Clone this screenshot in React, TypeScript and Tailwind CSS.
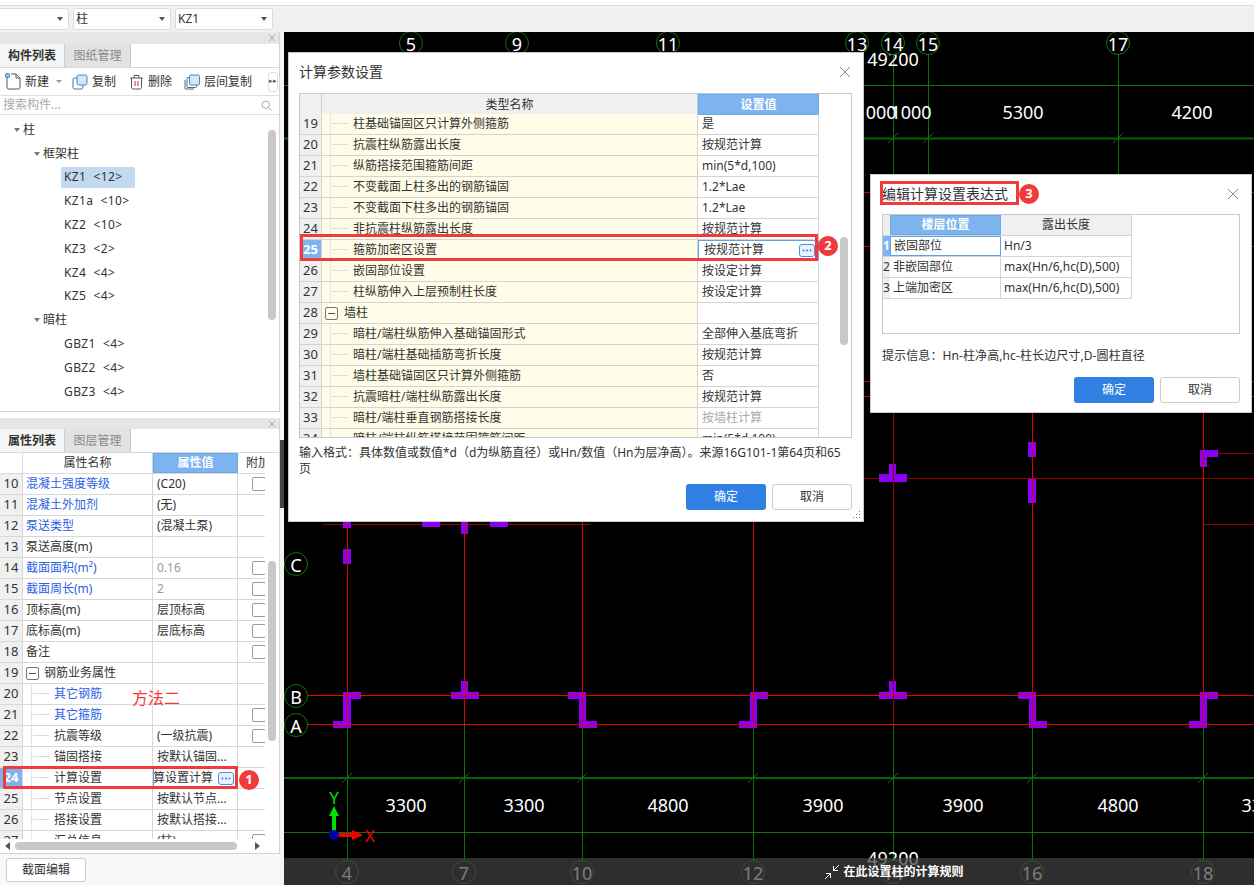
import React from "react"

const propRows = [
    {no: 10, name: "混凝土强度等级", value: "(C20)", blue: true, check: true},
    {no: 11, name: "混凝土外加剂", value: "(无)", blue: true},
    {no: 12, name: "泵送类型", value: "(混凝土泵)", blue: true},
    {no: 13, name: "泵送高度(m)", value: ""},
    {no: 14, name: "截面面积(m²)", value: "0.16", blue: true, check: true, gray: true},
    {no: 15, name: "截面周长(m)", value: "2", blue: true, check: true, gray: true},
    {no: 16, name: "顶标高(m)", value: "层顶标高", check: true},
    {no: 17, name: "底标高(m)", value: "层底标高", check: true},
    {no: 18, name: "备注", value: "", check: true},
    {no: 19, name: "钢筋业务属性", value: "", group: true},
    {no: 20, name: "其它钢筋", value: "", sub: true, blue: true},
    {no: 21, name: "其它箍筋", value: "", sub: true, blue: true, check: true},
    {no: 22, name: "抗震等级", value: "(一级抗震)", sub: true, check: true},
    {no: 23, name: "锚固搭接", value: "按默认锚固...", sub: true},
    {no: 24, name: "计算设置", value: "按默认计算设置计算", sub: true, active: true},
    {no: 25, name: "节点设置", value: "按默认节点...", sub: true},
    {no: 26, name: "搭接设置", value: "按默认搭接...", sub: true},
    {no: 27, name: "汇总信息", value: "(柱)", sub: true, check: true},
]

const paramRows = [
    {no: 19, name: "柱基础锚固区只计算外侧箍筋", value: "是"},
    {no: 20, name: "抗震柱纵筋露出长度", value: "按规范计算"},
    {no: 21, name: "纵筋搭接范围箍筋间距", value: "min(5*d,100)"},
    {no: 22, name: "不变截面上柱多出的钢筋锚固", value: "1.2*Lae"},
    {no: 23, name: "不变截面下柱多出的钢筋锚固", value: "1.2*Lae"},
    {no: 24, name: "非抗震柱纵筋露出长度", value: "按规范计算"},
    {no: 25, name: "箍筋加密区设置", value: "按规范计算", active: true},
    {no: 26, name: "嵌固部位设置", value: "按设定计算"},
    {no: 27, name: "柱纵筋伸入上层预制柱长度", value: "按设定计算"},
    {no: 28, name: "墙柱", value: "", group: true},
    {no: 29, name: "暗柱/端柱纵筋伸入基础锚固形式", value: "全部伸入基底弯折"},
    {no: 30, name: "暗柱/端柱基础插筋弯折长度", value: "按规范计算"},
    {no: 31, name: "墙柱基础锚固区只计算外侧箍筋", value: "否"},
    {no: 32, name: "抗震暗柱/端柱纵筋露出长度", value: "按规范计算"},
    {no: 33, name: "暗柱/端柱垂直钢筋搭接长度", value: "按墙柱计算", gray: true},
    {no: 34, name: "暗柱/端柱纵筋搭接范围箍筋间距", value: "min(5*d,100)"},
]

const treeRows = [
    {label: "柱", level: 0, open: true},
    {label: "框架柱", level: 1, open: true},
    {label: "KZ1  <12>", level: 2, selected: true},
    {label: "KZ1a  <10>", level: 2},
    {label: "KZ2  <10>", level: 2},
    {label: "KZ3  <2>", level: 2},
    {label: "KZ4  <4>", level: 2},
    {label: "KZ5  <4>", level: 2},
    {label: "暗柱", level: 1, open: true},
    {label: "GBZ1  <4>", level: 2},
    {label: "GBZ2  <4>", level: 2},
    {label: "GBZ3  <4>", level: 2},
]

const purple = [
    "343,692 361,692 361,699 351,699 351,728 333,728 333,721 343,721",
    "461,681 468,681 468,692 479,692 479,699 451,699 451,692 461,692",
    "568,692 586,692 586,721 597,721 597,728 579,728 579,699 568,699",
    "750,692 768,692 768,699 757,699 757,728 739,728 739,721 750,721",
    "889,681 896,681 896,692 907,692 907,699 879,699 879,692 889,692",
    "1018,692 1036,692 1036,721 1047,721 1047,728 1029,728 1029,699 1018,699",
    "1200,692 1218,692 1218,699 1207,699 1207,728 1189,728 1189,721 1200,721",
    "889,464 896,464 896,474 907,474 907,482 879,482 879,474 889,474",
    "1028,442 1036,442 1036,457 1028,457",
    "1028,479 1036,479 1036,503 1028,503",
    "1200,450 1218,450 1218,457 1207,457 1207,467 1200,467",
    "343,549 351,549 351,564 343,564",
    "343,518 351,518 351,528 343,528",
    "422,518 440,518 440,527 422,527",
    "461,518 468,518 468,534 461,534",
    "490,518 508,518 508,527 490,527",
]

const bottomAxes = [[347, "4"], [464, "7"], [582, "10"], [753, "12"], [893, "14"], [1032, "16"], [1203, "18"]] as const
const topAxes = [[411, "5"], [517, "9"], [668, "11"], [857, "13"], [893, "14"], [928, "15"], [1118, "17"]] as const
const sideAxes = [[564, "C"], [696, "B"], [725, "A"]] as const
const dims = [[406, 805, "3300"], [524, 805, "3300"], [668, 805, "4800"], [823, 805, "3900"], [963, 805, "3900"], [1118, 805, "4800"], [1262, 805, "3300"], [876, 112, "1000"], [911, 112, "1000"], [1023, 112, "5300"], [1192, 112, "4200"], [893, 59, "49200"], [893, 858, "49200"]] as const

function Axis({x, y, label}: {x: number; y: number; label: string}) {
    return (
        <g>
            <circle cx={x} cy={y} r={11.5} fill="#000" stroke="#0b7a0b" strokeWidth={1}/>
            <text x={x} y={y + 1} fill="#fff" fontSize={18} textAnchor="middle" dominantBaseline="central">{label}</text>
        </g>
    )
}

function CadCanvas() {
    const vLine = "#0b730b"
    return (
        <svg className="block w-full h-full" viewBox="284 32 970 853" fontFamily="'Noto Sans', sans-serif">
            <rect x={284} y={32} width={970} height={853} fill="#000"/>
            <path d="M284 85.5H1254M284 832.5H1254" stroke={vLine} strokeWidth={1}/>
            <path d="M284 138.5H1254M284 778H1254" stroke="#0a5f0a" strokeWidth={2}/>
            {topAxes.map(([x]) => <path key={x} d={`M${x + 0.5} 54V180`} stroke={vLine}/>)}
            {bottomAxes.map(([x]) => <path key={x} d={`M${x + 0.5} 725V862`} stroke={vLine}/>)}
            {[...topAxes.slice(4)].map(([x]) => <path key={x} d={`M${x - 5} 143L${x + 5} 133`} stroke={vLine}/>)}
            {bottomAxes.map(([x]) => <path key={x} d={`M${x - 5} 783L${x + 5} 773`} stroke={vLine}/>)}
            {[192, 246, 381, 396].map((y) => <path key={y} d={`M864 ${y + 0.5}H1254`} stroke="#b00000"/>)}
            <path d="M864 478.5H1254M323 524.5H590M1203 453.5H1254M1203 524.5H1254" stroke="#8f0000"/>
            {purple.map((p) => <polygon key={p} points={p} fill="#8a00f5"/>)}
            <path d="M347.5 410V725M464.5 410V725M582.5 410V725M753.5 410V725M1032.5 410V725M1203.5 410V725" stroke="#e00000"/>
            <path d="M893.5 410V725" stroke="#980000"/>
            <path d="M284 695.5H1254M284 724.5H1254" stroke="#f00000"/>
            {dims.map(([x, y, t], i) => (
                <text key={i} x={x} y={y} fill="#fff" fontSize={18} textAnchor="middle" dominantBaseline="central">{t}</text>
            ))}
            {topAxes.map(([x, t]) => <Axis key={x} x={x} y={43} label={t}/>)}
            {bottomAxes.map(([x, t]) => <Axis key={x} x={x} y={872} label={t}/>)}
            {sideAxes.map(([y, t]) => <Axis key={y} x={296} y={y} label={t}/>)}
            <path d="M334 835V816" stroke="#00e000" strokeWidth={4}/>
            <polygon points="334,806 339,816 329,816" fill="#00e000"/>
            <text x={334} y={797} fill="#00e000" fontSize={17} textAnchor="middle" dominantBaseline="central">Y</text>
            <path d="M338 835H353" stroke="#f00000" strokeWidth={4}/>
            <polygon points="363,835 352,830 352,840" fill="#f00000"/>
            <text x={370} y={835} fill="#f00000" fontSize={17} textAnchor="middle" dominantBaseline="central">X</text>
            <circle cx={334} cy={835} r={5} fill="#0000a8"/>
        </svg>
    )
}

function Caret() {
    return <span className="block w-0 h-0 border-x-[3px] border-x-transparent border-t-[4px] border-t-[#555]"/>
}

function SelectBox({label, width}: {label: string; width: string}) {
    return (
        <div className={`${width} h-[22px] flex items-center justify-between pl-[2px] pr-[5px] bg-white border border-[#dcdcdc] rounded-[3px] text-[#333]`}>
            <span>{label}</span>
            <Caret/>
        </div>
    )
}

function CloseBar() {
    return (
        <div className="h-[12px] bg-[#e6e6e6] flex items-center justify-end pr-[3px] shrink-0">
            <svg width="8" height="8" viewBox="0 0 8 8"><path d="M1 1L7 7M7 1L1 7" stroke="#a8a8a8" strokeWidth="1"/></svg>
        </div>
    )
}

function Tabs({first, second}: {first: string; second: string}) {
    return (
        <div className="h-[24px] flex bg-white border-b border-[#d8d8d8] shrink-0">
            <div className="w-[65px] flex items-center justify-center font-bold text-[#333] bg-[#f5f5f5] border-r border-[#d0d0d0]">{first}</div>
            <div className="w-[66px] flex items-center justify-center text-[#8a8a8a] bg-[#e2e2e2] border-r border-[#c8c8c8]">{second}</div>
        </div>
    )
}

function NewIcon() {
    return (
        <svg width="16" height="17" viewBox="0 0 16 17" fill="none">
            <path d="M2 5V14.5C2 15.3 2.6 16 3.4 16H13.5C14.3 16 15 15.3 15 14.5V5L11 1H6" stroke="#555"/>
            <path d="M11 1V5H15" stroke="#555"/>
            <rect x="0" y="0" width="5" height="5" fill="#4a90e2"/>
            <path d="M0 0L5 5M5 0L0 5" stroke="#fff" strokeWidth="0.7"/>
        </svg>
    )
}

function CopyIcon() {
    return (
        <svg width="16" height="16" viewBox="0 0 16 16" fill="none">
            <rect x="1" y="4" width="10" height="11" rx="1.5" stroke="#666"/>
            <rect x="5" y="1" width="10" height="10" rx="1.5" fill="#d6e6fa" stroke="#3a86e0"/>
        </svg>
    )
}

function TrashIcon() {
    return (
        <svg width="15" height="16" viewBox="0 0 15 16" fill="none">
            <path d="M1 4H14M5 4V1.5H10V4" stroke="#555"/>
            <path d="M2.5 4V13.5C2.5 14.4 3.1 15 4 15H11C11.9 15 12.5 14.4 12.5 13.5V4" stroke="#555"/>
            <path d="M6 7V12M9 7V12" stroke="#e02020"/>
        </svg>
    )
}

function FloorCopyIcon() {
    return (
        <svg width="16" height="16" viewBox="0 0 16 16" fill="none">
            <path d="M1 6V15H10" stroke="#666"/>
            <rect x="3" y="3.5" width="9.5" height="10" rx="1" stroke="#666"/>
            <rect x="5.5" y="1" width="10" height="10" rx="1.5" fill="#d6e6fa" stroke="#3a86e0"/>
        </svg>
    )
}

function ToolBar() {
    return (
        <div className="h-[28px] flex items-center pl-[5px] text-[#333] bg-white border-b border-[#e0e0e0] shrink-0">
            <NewIcon/>
            <span className="ml-[4px]">新建</span>
            <span className="ml-[7px] block w-0 h-0 border-x-[3px] border-x-transparent border-t-[3px] border-t-[#999]"/>
            <span className="ml-[10px]"><CopyIcon/></span>
            <span className="ml-[4px]">复制</span>
            <span className="ml-[13px]"><TrashIcon/></span>
            <span className="ml-[4px]">删除</span>
            <span className="ml-[12px]"><FloorCopyIcon/></span>
            <span className="ml-[4px]">层间复制</span>
            <div className="ml-[16px] w-[10px] h-[20px] border border-[#e0e0e0] rounded-[3px] flex items-center justify-center text-[7px] text-[#555]">▸▸</div>
        </div>
    )
}

function ComponentTree() {
    return (
        <div className="flex-1 flex bg-white overflow-hidden pt-[3px] relative">
            <div className="flex-1 flex flex-col">
                {treeRows.map((row) => (
                    <div key={row.label} className="h-[23.8px] flex items-center text-[#333] shrink-0">
                        {row.level === 0 && <span className="ml-[14px] mr-[3px]"><TreeCaret/></span>}
                        {row.level === 1 && <span className="ml-[34px] mr-[3px]"><TreeCaret/></span>}
                        {row.level === 2 && (
                            <span className={`ml-[61px] w-[74px] h-[21px] pl-[3px] rounded-[2px] flex items-center whitespace-pre tracking-[0.4px] ${row.selected ? "bg-[#c2d9f1]" : ""}`}>{row.label}</span>
                        )}
                        {row.level < 2 && <span>{row.label}</span>}
                    </div>
                ))}
            </div>
            <div className="w-[8px] mr-[3px] pt-[12px]">
                <div className="w-[8px] h-[190px] bg-[#c8c8c8] rounded-[4px]"/>
            </div>
        </div>
    )
}

function TreeCaret() {
    return <span className="block w-0 h-0 border-x-[3.5px] border-x-transparent border-t-[4px] border-t-[#777]"/>
}

function Collapse() {
    return (
        <span className="w-[13px] h-[13px] shrink-0 border border-[#777] rounded-[2px] flex items-center justify-center">
            <span className="block w-[7px] h-px bg-[#555]"/>
        </span>
    )
}

function TreeLine() {
    return (
        <>
            <span className="absolute left-[8px] top-0 bottom-0 w-px bg-[#e4e4e4]"/>
            <span className="absolute left-[10px] top-[9px] w-[16px] h-px bg-[#dcdcdc]"/>
        </>
    )
}

function MoreButton() {
    return (
        <span className="w-[16px] h-[13px] shrink-0 border border-[#4a90e2] rounded-[3px] bg-[#eaf3fd] flex items-center justify-center">
            <svg width="10" height="3" viewBox="0 0 10 3"><circle cx="1.5" cy="1.5" r="1" fill="#2f7fe0"/><circle cx="5" cy="1.5" r="1" fill="#2f7fe0"/><circle cx="8.5" cy="1.5" r="1" fill="#2f7fe0"/></svg>
        </span>
    )
}

function Badge({n, className}: {n: number; className: string}) {
    return (
        <div className={`absolute w-[20px] h-[20px] rounded-full bg-[#f23a3a] text-white font-bold text-[13px] flex items-center justify-center ${className}`}>{n}</div>
    )
}

function PropertyTable() {
    return (
        <div className="flex-1 bg-white overflow-hidden relative">
            <div className="w-[265px] h-[387px] overflow-hidden">
                <div className="grid grid-cols-[23px_130px_85px_27px] h-[21px] text-[#333] border-b border-[#d8d8d8]">
                    <div className="border-r border-[#d8d8d8]"/>
                    <div className="flex items-center justify-center border-r border-[#d8d8d8]">属性名称</div>
                    <div className="flex items-center justify-center bg-[#7db4f0] border border-[#6aa8ec] text-white font-bold">属性值</div>
                    <div className="flex items-center pl-[8px] whitespace-nowrap overflow-hidden">附加</div>
                </div>
                {propRows.map((row) => (
                    <div key={row.no} className="grid grid-cols-[23px_130px_85px_27px] h-[21px] border-b border-[#d8d8d8] text-[#333]">
                        <div className={`flex items-center justify-center border-r border-[#d8d8d8] text-[13px] ${row.active ? "bg-[#7db4f0] text-white font-bold" : "bg-[#f0f0f0]"}`}>{row.no}</div>
                        <div className={`relative flex items-center border-r border-[#d8d8d8] whitespace-nowrap ${row.sub ? "pl-[31px]" : "pl-[3px]"} ${row.blue ? "text-[#2b62e3]" : ""}`}>
                            {row.sub && <TreeLine/>}
                            {row.group && <span className="mr-[5px]"><Collapse/></span>}
                            {row.name}
                        </div>
                        {row.active ? (
                            <div className="flex items-center justify-end overflow-hidden border border-[#5fa2ec] pr-[3px] gap-[5px]">
                                <span className="shrink-0 whitespace-nowrap">{row.value}</span>
                                <MoreButton/>
                            </div>
                        ) : (
                            <div className={`flex items-center pl-[4px] border-r border-[#d8d8d8] whitespace-nowrap overflow-hidden ${row.gray ? "text-[#999]" : ""}`}>{row.value}</div>
                        )}
                        <div className="flex items-center pl-[14px] overflow-hidden">
                            {row.check && <span className="w-[14px] h-[14px] shrink-0 border border-[#9a9a9a] rounded-[2px] bg-white"/>}
                        </div>
                    </div>
                ))}
            </div>
            <div className="absolute right-[3px] top-[108px] w-[8px] h-[180px] bg-[#c8c8c8] rounded-[4px]"/>
            <div className="absolute left-0 right-0 bottom-0 h-[14px] bg-white flex items-center px-[5px]">
                <span className="block w-0 h-0 border-y-[4px] border-y-transparent border-r-[5px] border-r-[#555]"/>
                <div className="ml-[5px] w-[222px] h-[8px] bg-[#c8c8c8] rounded-[4px]"/>
                <span className="ml-auto mr-[14px] block w-0 h-0 border-y-[4px] border-y-transparent border-l-[5px] border-l-[#555]"/>
            </div>
            <div className="absolute left-[3px] top-[313px] w-[235px] h-[23px] border-[3px] border-[#f23a3a]"/>
            <Badge n={1} className="left-[239px] top-[317px]"/>
            <div className="absolute left-[132px] top-[233px] text-[16px] text-[#f23a3a]">方法二</div>
        </div>
    )
}

function LeftPanel() {
    return (
        <div className="w-[280px] shrink-0 flex flex-col bg-[#f8f8f8] text-[12px]">
            <div className="h-[380px] flex flex-col border-r border-b border-[#d4d4d4] shrink-0">
                <CloseBar/>
                <Tabs first="构件列表" second="图纸管理"/>
                <ToolBar/>
                <div className="h-[19px] flex items-center justify-between pl-[3px] pr-[7px] bg-white border-b border-[#e0e0e0] text-[#aaa] shrink-0">
                    <span>搜索构件...</span>
                    <svg width="11" height="11" viewBox="0 0 11 11" fill="none"><circle cx="4.7" cy="4.7" r="3.7" stroke="#aaa"/><path d="M7.5 7.5L10.5 10.5" stroke="#aaa"/></svg>
                </div>
                <ComponentTree/>
            </div>
            <div className="h-[6px] bg-white shrink-0"/>
            <div className="h-[436px] flex flex-col border-r border-b border-[#d4d4d4] shrink-0 overflow-hidden">
                <div className="h-[11px] bg-[#e6e6e6] flex items-center justify-end pr-[3px] shrink-0">
                    <svg width="8" height="8" viewBox="0 0 8 8"><path d="M1 1L7 7M7 1L1 7" stroke="#a8a8a8"/></svg>
                </div>
                <Tabs first="属性列表" second="图层管理"/>
                <PropertyTable/>
            </div>
            <div className="flex-1 flex items-center pl-[6px] bg-[#f8f8f8]">
                <div className="w-[80px] h-[24px] flex items-center justify-center bg-white border border-[#ccc] rounded-[3px] text-[#333]">截面编辑</div>
            </div>
        </div>
    )
}

function DialogButtons() {
    return (
        <div className="flex justify-end gap-[6px] text-[12px]">
            <div className="w-[80px] h-[26px] flex items-center justify-center bg-[#2f80e2] rounded-[3px] text-white">确定</div>
            <div className="w-[80px] h-[26px] flex items-center justify-center bg-white border border-[#ccc] rounded-[3px] text-[#333]">取消</div>
        </div>
    )
}

function CloseIcon() {
    return <svg width="12" height="12" viewBox="0 0 12 12"><path d="M1 1L11 11M11 1L1 11" stroke="#888" strokeWidth="1"/></svg>
}

function ParamDialog() {
    return (
        <div className="absolute left-[4px] top-[20px] w-[576px] h-[470px] bg-white border border-[#c8c8c8] flex flex-col pl-[10px] pr-[11px] text-[12px] text-[#333]">
            <div className="h-[40px] flex items-center justify-between pb-[3px] shrink-0">
                <span className="text-[14px]">计算参数设置</span>
                <span className="mr-[1px]"><CloseIcon/></span>
            </div>
            <div className="h-[345px] w-[553px] relative border border-[#c8c8c8] overflow-hidden shrink-0">
                <div className="w-[519px]">
                    <div className="grid grid-cols-[22px_376px_121px] h-[20px] border-b border-[#d0d0d0]">
                        <div className="bg-[#f0f0f0] border-r border-[#d0d0d0]"/>
                        <div className="bg-[#f0f0f0] flex items-center justify-center pt-[1px] border-r border-[#d0d0d0]">类型名称</div>
                        <div className="bg-[#7db4f0] border border-[#6aa8ec] flex items-center justify-center pt-[1px] text-white font-bold">设置值</div>
                    </div>
                    {paramRows.map((row) => (
                        <div key={row.no} className="grid grid-cols-[22px_376px_121px] h-[21px] border-b border-[#d4d4d4]">
                            <div className={`flex items-center justify-center text-[13px] border-r border-[#d4d4d4] ${row.active ? "bg-[#7db4f0] text-white font-bold" : "bg-[#f0f0f0]"}`}>{row.no}</div>
                            <div className={`relative flex items-center bg-[#fffde8] border-r border-[#d4d4d4] whitespace-nowrap ${row.group ? "pl-[3px]" : "pl-[31px]"}`}>
                                {!row.group && <TreeLine/>}
                                {row.group && <span className="mr-[6px]"><Collapse/></span>}
                                {row.name}
                            </div>
                            {row.active ? (
                                <div className="flex items-center justify-between pl-[5px] pr-[3px] border border-[#5fa2ec]">
                                    <span>{row.value}</span>
                                    <MoreButton/>
                                </div>
                            ) : (
                                <div className={`flex items-center pl-[4px] border-r border-[#d4d4d4] ${row.gray ? "text-[#aaa]" : ""}`}>{row.value}</div>
                            )}
                        </div>
                    ))}
                </div>
                <div className="absolute left-[540px] top-[143px] w-[8px] h-[108px] bg-[#c8c8c8] rounded-[4px]"/>
                <div className="absolute left-0 top-[140px] w-[518px] h-[27px] border-[3px] border-[#f23a3a]"/>
                <Badge n={2} className="left-[518px] top-[142px]"/>
            </div>
            <p className="mt-[7px] h-[32px] leading-[16px] shrink-0">输入格式：具体数值或数值*d（d为纵筋直径）或Hn/数值（Hn为层净高）。来源16G101-1第64页和65页</p>
            <div className="mt-[7px]"><DialogButtons/></div>
            <svg className="absolute right-[2px] bottom-[2px]" width="9" height="9" viewBox="0 0 9 9">
                <path d="M7 1h1v1H7zM4 4h1v1H4zM7 4h1v1H7zM1 7h1v1H1zM4 7h1v1H4zM7 7h1v1H7z" fill="#777"/>
            </svg>
        </div>
    )
}

function ExprDialog() {
    return (
        <div className="absolute left-[586px] top-[142px] w-[382px] h-[239px] bg-white border border-[#c8c8c8] flex flex-col px-[11px] text-[12px] text-[#333]">
            <div className="h-[39px] flex items-center justify-between pb-[2px] shrink-0">
                <span className="text-[14px]">编辑计算设置表达式</span>
                <span className="mr-[1px]"><CloseIcon/></span>
            </div>
            <div className="h-[120px] border border-[#c8c8c8] shrink-0">
                <div className="w-[249px]">
                    <div className="grid grid-cols-[7px_111px_131px] h-[21px] border-b border-[#d4d4d4]">
                        <div className="bg-[#f0f0f0]"/>
                        <div className="bg-[#7db4f0] border border-[#6aa8ec] flex items-center justify-center text-white font-bold">楼层位置</div>
                        <div className="bg-[#f0f0f0] flex items-center justify-center border-r border-[#d4d4d4]">露出长度</div>
                    </div>
                    {[["1", "嵌固部位", "Hn/3"], ["2", "非嵌固部位", "max(Hn/6,hc(D),500)"], ["3", "上端加密区", "max(Hn/6,hc(D),500)"]].map(([n, a, b], i) => (
                        <div key={n} className="grid grid-cols-[7px_111px_131px] h-[21px] border-b border-[#d4d4d4]">
                            <div className={`flex items-center justify-center overflow-hidden ${i === 0 ? "bg-[#7db4f0] text-white font-bold" : "bg-[#f0f0f0]"}`}>{n}</div>
                            <div className={`flex items-center pl-[3px] ${i === 0 ? "border border-[#5fa2ec]" : "border-r border-[#d4d4d4]"}`}>{a}</div>
                            <div className="flex items-center pl-[3px] border-r border-[#d4d4d4]">{b}</div>
                        </div>
                    ))}
                </div>
            </div>
            <p className="mt-[14px] h-[16px] leading-[16px] shrink-0 tracking-[0.1px]">提示信息：Hn-柱净高,hc-柱长边尺寸,D-圆柱直径</p>
            <div className="mt-[13px]"><DialogButtons/></div>
            <div className="absolute left-[9px] top-[6px] w-[139px] h-[24px] border-[3px] border-[#f23a3a]"/>
            <Badge n={3} className="left-[148px] top-[9px]"/>
        </div>
    )
}

function HintBar() {
    return (
        <div className="absolute left-0 right-0 bottom-0 h-[27px] bg-[#414141]/70 flex items-center justify-center pl-[250px] gap-[3px] text-white text-[12px] font-bold">
            <svg width="16" height="16" viewBox="0 0 16 16" fill="none">
                <path d="M1 15L6.5 9.5M2 9.5H6.5V14M15 1L9.5 6.5M14 6.5H9.5V2" stroke="#fff"/>
            </svg>
            <span>在此设置柱的计算规则</span>
        </div>
    )
}

export default function App() {
    return (
        <div className="w-[1254px] h-[888px] overflow-hidden bg-white flex flex-col font-['Noto_Sans','Noto_Sans_CJK_SC',sans-serif] text-[12px]">
            <div className="h-[6px] bg-white border-b border-[#dcdcdc] shrink-0"/>
            <div className="h-[26px] bg-[#f0f0f0] flex items-start pt-[2px] gap-[4px] -ml-[5px] shrink-0">
                <SelectBox label="" width="w-[74px]"/>
                <SelectBox label="柱" width="w-[98px]"/>
                <SelectBox label="KZ1" width="w-[98px]"/>
            </div>
            <div className="h-[853px] flex shrink-0">
                <LeftPanel/>
                <div className="w-[4px] bg-[#f4f4f4] relative shrink-0">
                    <div className="absolute left-0 top-[408px] w-[4px] h-[68px] bg-[#444]"/>
                </div>
                <div className="flex-1 relative bg-black overflow-hidden">
                    <CadCanvas/>
                    <HintBar/>
                    <ParamDialog/>
                    <ExprDialog/>
                </div>
            </div>
        </div>
    )
}
